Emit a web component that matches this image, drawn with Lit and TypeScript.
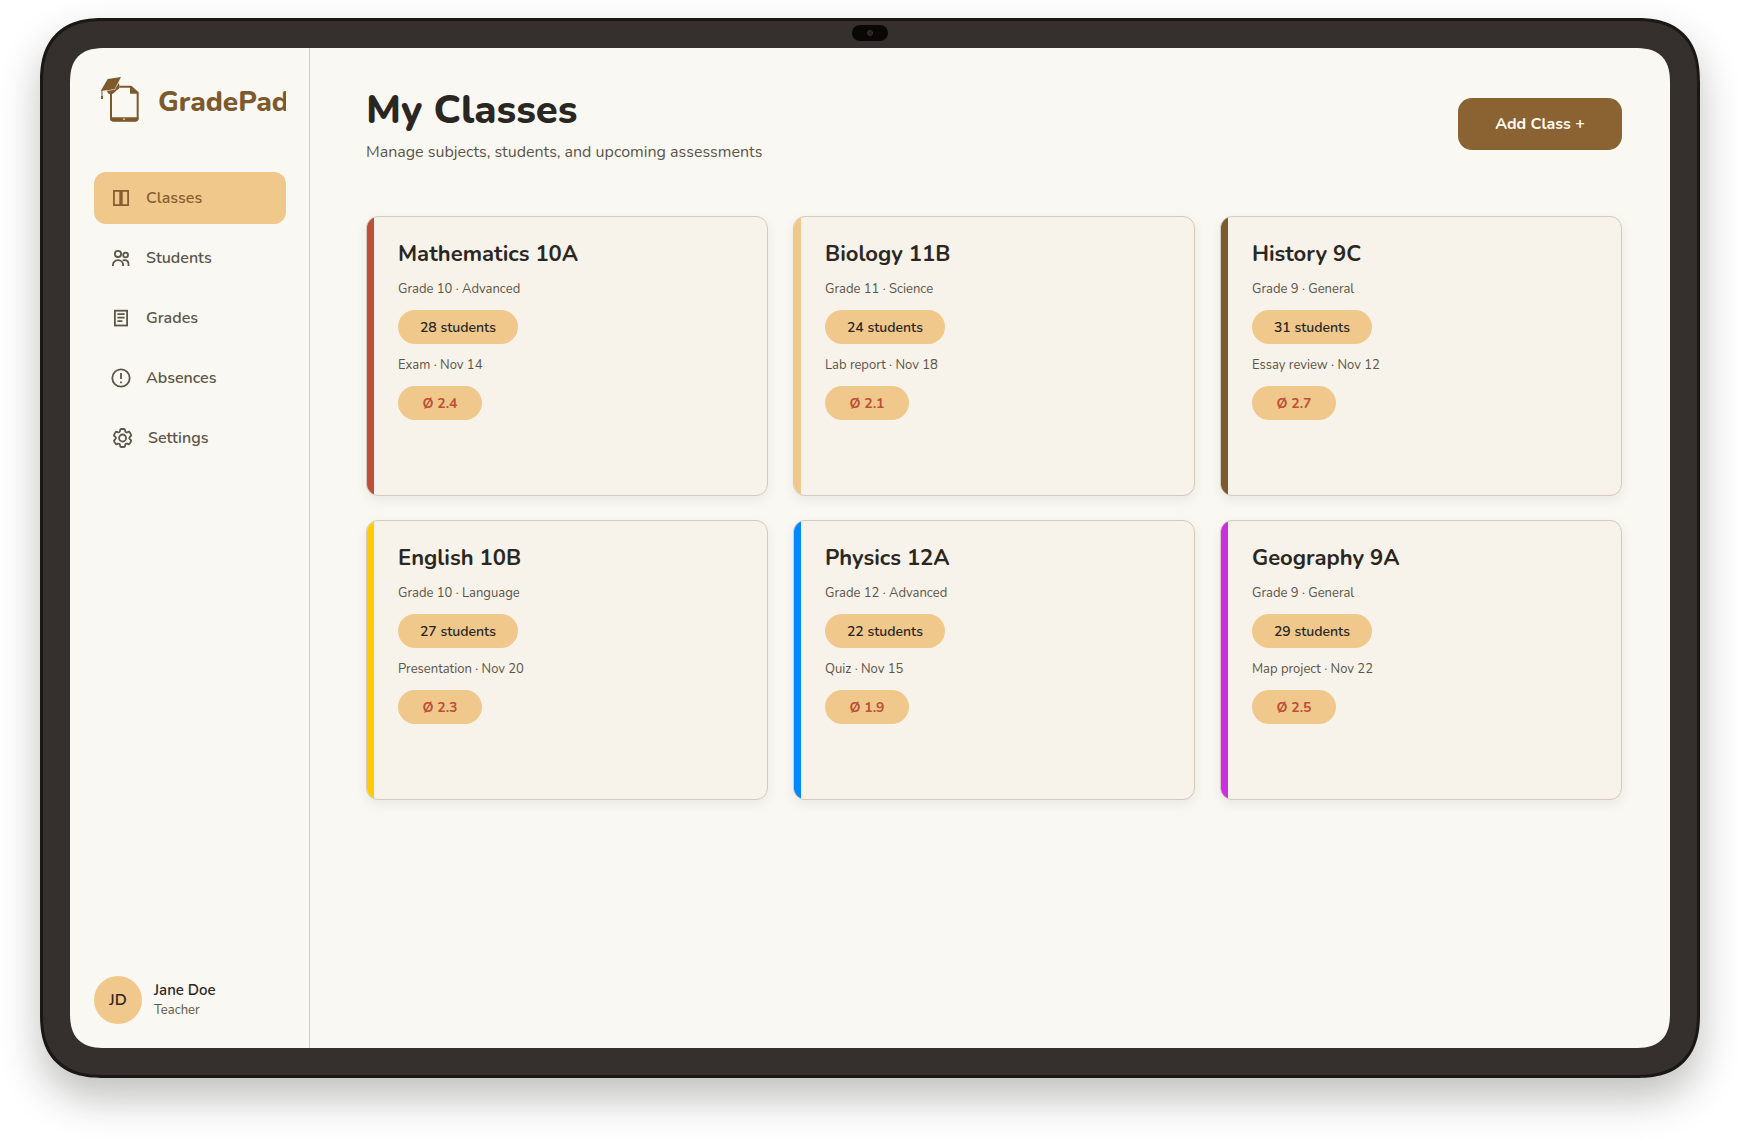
import { LitElement, html, css, svg } from 'lit';
import { customElement, property, state } from 'lit/decorators.js';
import { classMap } from 'lit/directives/class-map.js';
import { styleMap } from 'lit/directives/style-map.js';

interface SchoolClass {
  name: string;
  level: string;
  students: number;
  next: string;
  average: string;
  accent: string;
}

const CLASSES: SchoolClass[] = [
  { name: 'Mathematics 10A', level: 'Grade 10 · Advanced', students: 28, next: 'Exam · Nov 14', average: '2.4', accent: '#bd5038' },
  { name: 'Biology 11B', level: 'Grade 11 · Science', students: 24, next: 'Lab report · Nov 18', average: '2.1', accent: '#f0c88c' },
  { name: 'History 9C', level: 'Grade 9 · General', students: 31, next: 'Essay review · Nov 12', average: '2.7', accent: '#7c5a2e' },
  { name: 'English 10B', level: 'Grade 10 · Language', students: 27, next: 'Presentation · Nov 20', average: '2.3', accent: '#ffcc00' },
  { name: 'Physics 12A', level: 'Grade 12 · Advanced', students: 22, next: 'Quiz · Nov 15', average: '1.9', accent: '#0088ff' },
  { name: 'Geography 9A', level: 'Grade 9 · General', students: 29, next: 'Map project · Nov 22', average: '2.5', accent: '#cb30e0' },
];

const NAV = [
  {
    label: 'Classes',
    size: 22,
    icon: svg`<rect x="3.9" y="3.9" width="6.3" height="14.2"/><rect x="11.8" y="3.9" width="6.3" height="14.2"/>`,
  },
  {
    label: 'Students',
    size: 22,
    icon: svg`<circle cx="8" cy="6.9" r="3.1"/><circle cx="15.6" cy="8" r="2.4"/>
      <path d="M2.9 19v-.9c0-2.8 2.2-4.9 5.1-4.9s5.1 2.1 5.1 4.9v.9"/><path d="M12.6 13.4c.6-.2 1.3-.3 2-.3 2.4 0 3.9 1.7 3.900 4.2v1.700"/>`,
  },
  {
    label: 'Grades',
    size: 22,
    icon: svg`<rect x="4.900" y="3.700" width="12.200" height="14.800"/><path d="M7.400 7.200h7.200M7.400 10.700h7.200M7.400 14.200h5"/>`,
  },
  {
    label: 'Absences',
    size: 22,
    icon: svg`<circle cx="11" cy="11" r="8.700"/><path d="M11 6v6M11 14.400v1.800"/>`,
  },
  {
    label: 'Settings',
    size: 24,
    icon: svg`<g transform="translate(.6 0)"><path d="M9.594 3.94c.09-.542.56-.94 1.11-.94h2.593c.55 0 1.02.398 1.11.94l.213 1.281c.063.374.313.686.645.87.074.04.147.083.22.127.325.196.72.257 1.075.124l1.217-.456a1.125 1.125 0 0 1 1.37.49l1.296 2.247a1.125 1.125 0 0 1-.26 1.431l-1.003.827c-.293.241-.438.613-.43.992a7.723 7.723 0 0 1 0 .255c-.008.378.137.75.43.991l1.004.827c.424.35.534.955.26 1.43l-1.298 2.247a1.125 1.125 0 0 1-1.369.491l-1.217-.456c-.355-.133-.75-.072-1.076.124a6.47 6.47 0 0 1-.22.128c-.331.183-.581.495-.644.869l-.213 1.281c-.09.543-.56.94-1.11.94h-2.594c-.55 0-1.019-.398-1.11-.94l-.213-1.281c-.062-.374-.312-.686-.644-.87a6.52 6.52 0 0 1-.22-.127c-.325-.196-.72-.257-1.076-.124l-1.217.456a1.125 1.125 0 0 1-1.369-.49l-1.297-2.247a1.125 1.125 0 0 1 .26-1.431l1.004-.827c.292-.24.437-.613.43-.991a6.932 6.932 0 0 1 0-.255c.007-.38-.138-.751-.43-.992l-1.004-.827a1.125 1.125 0 0 1-.26-1.43l1.297-2.247a1.125 1.125 0 0 1 1.37-.491l1.216.456c.356.133.751.072 1.076-.124.072-.044.146-.086.22-.128.332-.183.582-.495.644-.869l.214-1.28Z"/><circle cx="12" cy="12" r="3.5"/></g>`,
  },
];

@customElement('class-card')
export class ClassCard extends LitElement {
  @property({ attribute: false }) item!: SchoolClass;

  static styles = css`
    :host {
      display: grid;
    }
    .card {
      display: flex;
      overflow: hidden;
      border: 1px solid #d5cabb;
      border-radius: 12px;
      background: #f7f2ea;
      box-shadow: 0 4px 12px rgba(42, 39, 35, 0.08);
    }
    .accent {
      flex: none;
      width: 7px;
    }
    .body {
      display: flex;
      flex: 1;
      flex-direction: column;
      align-items: flex-start;
      gap: 12px;
      min-width: 0;
      padding: 23px 24px;
    }
    .name {
      margin: 0;
      color: #2a2723;
      font-size: 22px;
      font-weight: 700;
      line-height: 28px;
    }
    .meta {
      margin: 0;
      color: #5c5548;
      font-size: 13px;
      line-height: 18px;
    }
    .pill {
      box-sizing: border-box;
      min-width: 120px;
      padding: 8px 16px 6px;
      border-radius: 17px;
      background: #f0c88c;
      color: #2a2723;
      font-size: 14px;
      font-weight: 600;
      line-height: 20px;
      text-align: center;
    }
    .average {
      min-width: 84px;
      color: #bd5038;
      font-weight: 700;
    }
  `;

  render() {
    const c = this.item;
    return html`
      <article class="card">
        <div class="accent" style=${styleMap({ background: c.accent })}></div>
        <div class="body">
          <h2 class="name">${c.name}</h2>
          <p class="meta">${c.level}</p>
          <span class="pill">${c.students} students</span>
          <p class="meta">${c.next}</p>
          <span class="pill average">Ø ${c.average}</span>
        </div>
      </article>
    `;
  }
}

@customElement('app-root')
export class AppRoot extends LitElement {
  @state() private active = 'Classes';

  static styles = css`
    :host {
      display: flex;
      box-sizing: border-box;
      min-height: 100vh;
      padding: 18px 40px 62px;
      background: #ffffff;
      font-family: Nunito, Lato, 'Open Sans', sans-serif;
    }
    .device {
      display: flex;
      flex: 1;
      flex-direction: column;
      min-width: 0;
      padding: 0 27px 27px;
      border: 3px solid #1a1815;
      border-radius: 56px;
      background: #35302d;
      box-shadow: 0 20px 40px rgba(26, 24, 21, 0.28);
    }
    .bezel-top {
      display: flex;
      justify-content: center;
      align-items: flex-start;
      box-sizing: border-box;
      height: 27px;
      padding-top: 4px;
    }
    .camera {
      display: flex;
      justify-content: center;
      align-items: center;
      width: 36px;
      height: 16px;
      border-radius: 8px;
      background: #090807;
    }
    .lens {
      box-sizing: border-box;
      width: 6px;
      height: 6px;
      border: 1px solid #3d3425;
      border-radius: 50%;
      background: #26231f;
    }
    .screen {
      display: flex;
      flex: 1;
      overflow: hidden;
      border-radius: 28px;
      background: #faf8f3;
    }
    @supports (corner-shape: superellipse(1.3)) {
      .device {
        border-radius: 64px;
        corner-shape: superellipse(1.3);
      }
      .screen {
        border-radius: 36px;
        corner-shape: superellipse(1.4);
      }
    }
    .sidebar {
      display: flex;
      flex: none;
      flex-direction: column;
      box-sizing: border-box;
      width: 240px;
      padding: 24px 23px 24px 24px;
      border-right: 1px solid #d5cabb;
    }
    .brand {
      display: flex;
      align-items: center;
      gap: 8px;
      overflow: hidden;
      margin-bottom: 40px;
      color: #7c5a2e;
      font-size: 28px;
      font-weight: 800;
      line-height: 38px;
    }
    .logo {
      flex: none;
      width: 56px;
      height: 60px;
    }
    .nav {
      display: flex;
      flex-direction: column;
      gap: 8px;
    }
    .link {
      display: flex;
      align-items: center;
      gap: 14px;
      height: 52px;
      padding: 0 16px;
      border-radius: 12px;
      color: #5c5548;
      font-size: 16px;
      font-weight: 600;
      line-height: 24px;
      text-decoration: none;
    }
    .link.active {
      background: #f0c88c;
      color: #855f30;
    }
    .icon {
      flex: none;
      fill: none;
      stroke: currentColor;
      stroke-width: 1.8;
    }
    .user {
      display: flex;
      align-items: center;
      gap: 12px;
      margin-top: auto;
    }
    .avatar {
      display: flex;
      justify-content: center;
      align-items: center;
      width: 48px;
      height: 48px;
      border-radius: 50%;
      background: #f0c88c;
      color: #2a2723;
      font-size: 16px;
      font-weight: 600;
    }
    .user-name {
      color: #2a2723;
      font-size: 15px;
      font-weight: 600;
      line-height: 20px;
    }
    .role {
      color: #5c5548;
      font-size: 13px;
      line-height: 20px;
    }
    .main {
      flex: 1;
      min-width: 0;
      padding: 36px 48px 48px 56px;
    }
    .header {
      display: flex;
      justify-content: space-between;
      align-items: center;
      gap: 24px;
      margin-bottom: 52px;
    }
    .title {
      margin: 0 0 4px;
      color: #2a2723;
      font-size: 40px;
      font-weight: 800;
      line-height: 52px;
    }
    .subtitle {
      margin: 0;
      color: #5c5548;
      font-size: 16px;
      line-height: 24px;
    }
    .add {
      flex: none;
      min-width: 164px;
      height: 52px;
      padding: 0 24px;
      border: 0;
      border-radius: 14px;
      background: #8b6332;
      color: #fffaf2;
      font: inherit;
      font-size: 16px;
      font-weight: 700;
      cursor: pointer;
    }
    .grid {
      display: grid;
      grid-template-columns: repeat(3, minmax(0, 1fr));
      grid-auto-rows: minmax(280px, auto);
      gap: 24px 25px;
    }
  `;

  private select(e: Event, label: string) {
    e.preventDefault();
    this.active = label;
  }

  render() {
    return html`
      <div class="device">
        <div class="bezel-top"><div class="camera"><div class="lens"></div></div></div>
        <div class="screen">
          <aside class="sidebar">
            <div class="brand">
              <svg class="logo" viewBox="0 0 168 180" aria-hidden="true">
                <path d="M51 62V139q0 7 7 7H124q7 0 7-7V62L111 44H76" fill="none" stroke="#7c5a2e" stroke-width="6" />
                <path d="M108 42L134 65H108Z" fill="#7c5a2e" />
                <path d="M49 136H133V140q0 8-8 8H57q-8 0-8-8Z" fill="#7c5a2e" />
                <rect x="87" y="139" width="6" height="5" rx="2" fill="#f0c88c" />
                <path d="M39 56L62 53L74 33Q79 44 75 50Q69 53 63 60Q56 68 49 67Q41 66 39 56Z" fill="#7c5a2e" />
                <path d="M81 15L41 21L20 57L62 52Z" fill="#7c5a2e" />
                <path d="M34 56L62 53L77 25" fill="none" stroke="#c9b797" stroke-width="1" />
                <path d="M24 55V80" fill="none" stroke="#7c5a2e" stroke-width="3" />
                <rect x="21" y="72" width="6" height="9" fill="#7c5a2e" />
              </svg>
              <span>GradePad</span>
            </div>
            <nav class="nav" aria-label="Main">
              ${NAV.map(
                (n) => html`
                  <a
                    href="#${n.label.toLowerCase()}"
                    class=${classMap({ link: true, active: this.active === n.label })}
                    @click=${(e: Event) => this.select(e, n.label)}
                  >
                    <svg class="icon" width=${n.size} height=${n.size} viewBox="0 0 ${n.size} ${n.size}" aria-hidden="true">${n.icon}</svg>
                    <span>${n.label}</span>
                  </a>
                `,
              )}
            </nav>
            <div class="user">
              <div class="avatar">JD</div>
              <div>
                <div class="user-name">Jane Doe</div>
                <div class="role">Teacher</div>
              </div>
            </div>
          </aside>
          <main class="main">
            <header class="header">
              <div>
                <h1 class="title">My Classes</h1>
                <p class="subtitle">Manage subjects, students, and upcoming assessments</p>
              </div>
              <button class="add" type="button">Add Class +</button>
            </header>
            <section class="grid" aria-label="Classes">
              ${CLASSES.map((c) => html`<class-card .item=${c}></class-card>`)}
            </section>
          </main>
        </div>
      </div>
    `;
  }
}
